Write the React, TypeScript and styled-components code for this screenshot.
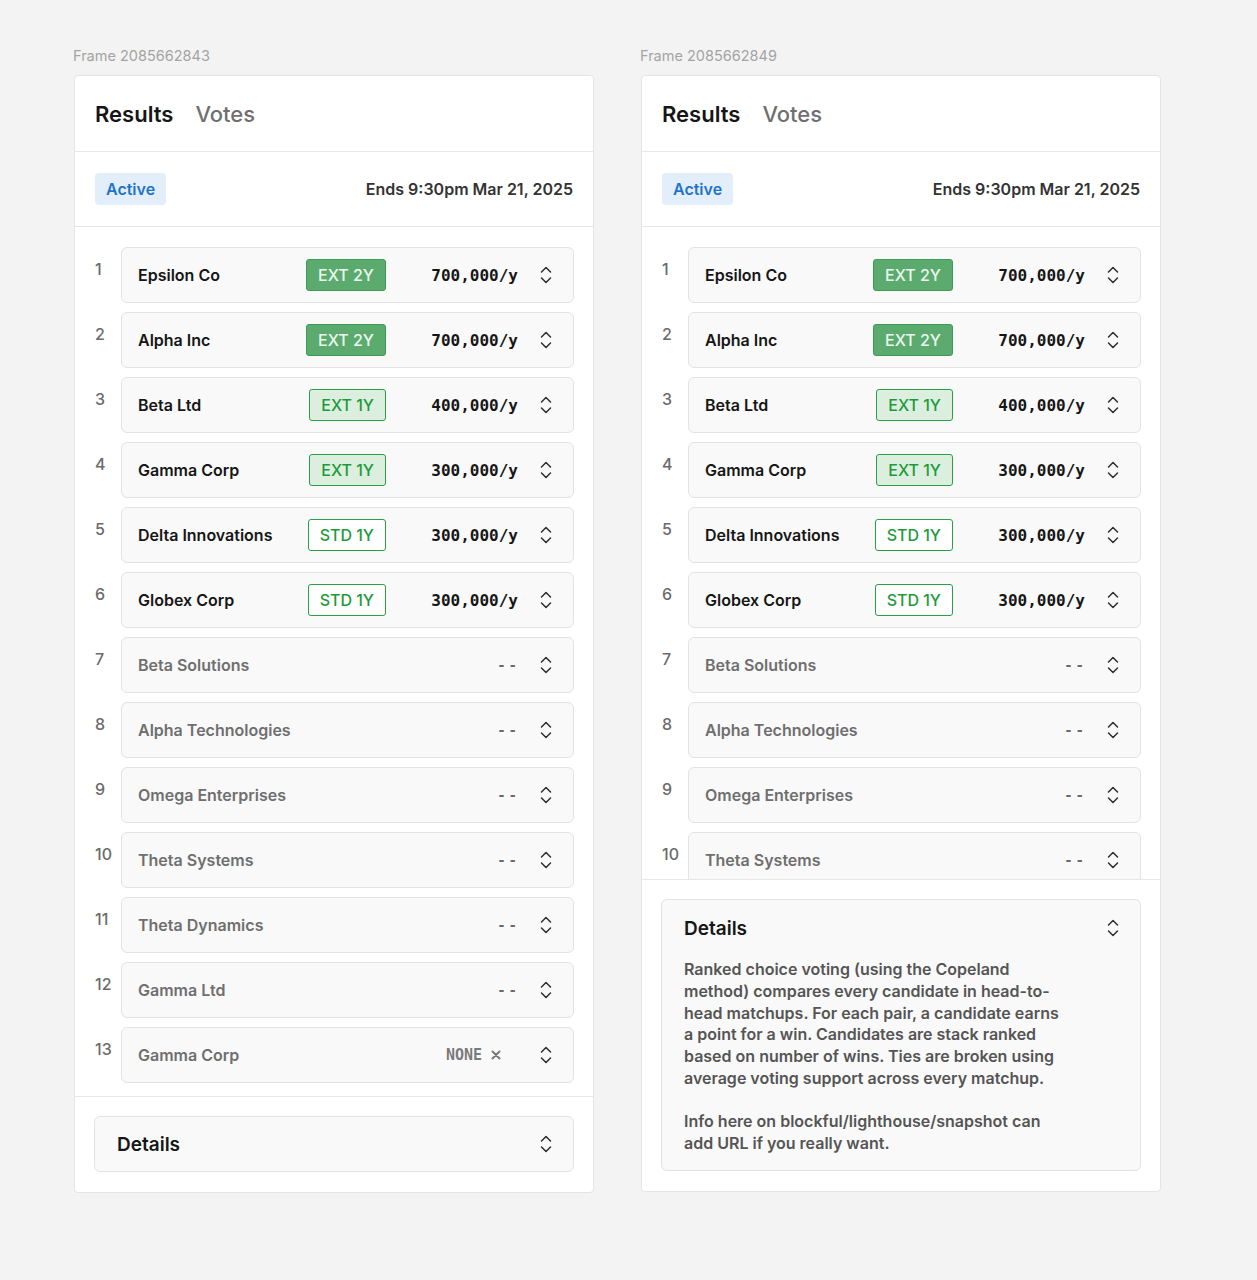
import React from "react";
import styled, { createGlobalStyle } from "styled-components";

const GlobalStyle = createGlobalStyle`
  * { box-sizing: border-box; }
  html, body { margin: 0; padding: 0; background: #f3f3f3; }
  body { font-family: Inter, "Noto Sans", sans-serif; -webkit-font-smoothing: antialiased; }
`;

const Page = styled.div`
  display: flex;
  gap: 47px;
  padding: 45px 0 80px 74px;
  min-height: 1280px;
  background: #f3f3f3;
`;

const Frame = styled.div`
  display: flex;
  flex-direction: column;
  width: 520px;
`;

const FrameLabel = styled.div`
  font-size: 14.5px;
  line-height: 20px;
  color: #a4a4a4;
  margin: 1px 0 9px -1px;
`;

const Card = styled.div`
  background: #fff;
  border: 1px solid #e4e4e4;
  border-radius: 4px;
  display: flex;
  flex-direction: column;
`;

const Header = styled.div`
  height: 76px;
  display: flex;
  align-items: center;
  gap: 22px;
  padding: 0 20px;
  border-bottom: 1px solid #e6e6e6;
`;

const Tab = styled.div<{ $active?: boolean }>`
  font-size: 22px;
  line-height: 28px;
  font-weight: ${(p) => (p.$active ? 600 : 500)};
  color: ${(p) => (p.$active ? "#161616" : "#6f6f6f")};
`;

const StatusRow = styled.div`
  height: 75px;
  display: flex;
  align-items: center;
  justify-content: space-between;
  padding: 0 20px;
  border-bottom: 1px solid #e6e6e6;
`;

const StatusBadge = styled.div`
  height: 32px;
  display: flex;
  align-items: center;
  padding: 0 11px;
  border-radius: 4px;
  background: #e2effa;
  color: #1f74c9;
  font-size: 16px;
  font-weight: 600;
`;

const Ends = styled.div`
  font-size: 16px;
  font-weight: 600;
  color: #333;
`;

const List = styled.div<{ $maxHeight?: number }>`
  display: flex;
  flex-direction: column;
  gap: 9px;
  padding: 20px 19px 13px 20px;
  border-bottom: 1px solid #e6e6e6;
  ${(p) => (p.$maxHeight ? `max-height: ${p.$maxHeight}px; overflow-y: auto; scrollbar-width: none;` : "")}
  &::-webkit-scrollbar { display: none; }
`;

const Item = styled.div`
  display: flex;
  flex-shrink: 0;
`;

const Rank = styled.div`
  width: 26px;
  flex-shrink: 0;
  padding-top: 10px;
  font-size: 16px;
  line-height: 24px;
  font-weight: 500;
  color: #6b6b6b;
`;

const Row = styled.div`
  flex: 1;
  height: 56px;
  display: flex;
  align-items: center;
  padding: 0 15px 0 16px;
  background: #f9f9f9;
  border: 1px solid #e3e3e3;
  border-radius: 6px;
`;

const Name = styled.div<{ $muted?: boolean }>`
  flex: 1;
  font-size: 16px;
  font-weight: 600;
  color: ${(p) => (p.$muted ? "#6f6f6f" : "#161616")};
`;

type Tone = "solid" | "light" | "outline";

const Tag = styled.div<{ $tone: Tone }>`
  height: 32px;
  display: flex;
  align-items: center;
  padding: 0 11px;
  border-radius: 3px;
  font-size: 16px;
  font-weight: 500;
  border: 1px solid ${(p) => (p.$tone === "solid" ? "#3f9a55" : "#2aa046")};
  background: ${(p) =>
    p.$tone === "solid" ? "#5bab6f" : p.$tone === "light" ? "#dcefdf" : "#ffffff"};
  color: ${(p) => (p.$tone === "solid" ? "#eef7f0" : "#1d9a3b")};
`;

const Value = styled.div`
  width: 116px;
  margin-left: 16px;
  display: flex;
  align-items: center;
  justify-content: flex-end;
  font-family: "DejaVu Sans Mono", "Liberation Mono", monospace;
  font-size: 16px;
  font-weight: 700;
  color: #161616;
  white-space: nowrap;
`;

const Dashes = styled.span`
  font-size: 14px;
  font-weight: 700;
  color: #6a6a6a;
  letter-spacing: 3px;
  margin-right: -2px;
`;

const NoneTag = styled.span`
  display: inline-flex;
  align-items: center;
  gap: 9px;
  margin-right: 17px;
  font-size: 15px;
  font-weight: 700;
  color: #7a7a7a;
`;

const ChevronBox = styled.div`
  width: 24px;
  margin-left: 16px;
  display: flex;
  align-items: center;
  justify-content: center;
  color: #2e2e2e;
`;

const DetailsSection = styled.div`
  padding: 19px 19px 20px 19px;
`;

const DetailsBox = styled.div<{ $open?: boolean }>`
  background: #f9f9f9;
  border: 1px solid #e3e3e3;
  border-radius: 6px;
  padding: ${(p) => (p.$open ? "16px 15px 15px 22px" : "0 15px 0 22px")};
`;

const DetailsHead = styled.div<{ $open?: boolean }>`
  height: ${(p) => (p.$open ? "24px" : "54px")};
  display: flex;
  align-items: center;
`;

const DetailsTitle = styled.div`
  flex: 1;
  font-size: 19px;
  font-weight: 600;
  color: #161616;
`;

const DetailsBody = styled.div`
  margin-top: 19px;
  max-width: 382px;
`;

const Para = styled.p`
  margin: 0;
  font-size: 16px;
  line-height: 21.75px;
  font-weight: 600;
  color: #555;
  & + & { margin-top: 21.75px; }
`;

const Chevrons = () => (
  <svg width="14" height="20" viewBox="0 0 14 20" fill="none" stroke="currentColor" strokeWidth="1.5" strokeLinecap="round" strokeLinejoin="round">
    <path d="M2.5 7 L7 2.5 L11.5 7" />
    <path d="M2.5 13 L7 17.5 L11.5 13" />
  </svg>
);

const CloseX = () => (
  <svg width="10" height="10" viewBox="0 0 10 10" fill="none" stroke="currentColor" strokeWidth="2" strokeLinecap="round">
    <path d="M1.5 1.5 L8.5 8.5 M8.5 1.5 L1.5 8.5" />
  </svg>
);

type Cand = { name: string; tag?: [string, Tone]; value?: string; none?: boolean };

const candidates: Cand[] = [
  { name: "Epsilon Co", tag: ["EXT 2Y", "solid"], value: "700,000/y" },
  { name: "Alpha Inc", tag: ["EXT 2Y", "solid"], value: "700,000/y" },
  { name: "Beta Ltd", tag: ["EXT 1Y", "light"], value: "400,000/y" },
  { name: "Gamma Corp", tag: ["EXT 1Y", "light"], value: "300,000/y" },
  { name: "Delta Innovations", tag: ["STD 1Y", "outline"], value: "300,000/y" },
  { name: "Globex Corp", tag: ["STD 1Y", "outline"], value: "300,000/y" },
  { name: "Beta Solutions" },
  { name: "Alpha Technologies" },
  { name: "Omega Enterprises" },
  { name: "Theta Systems" },
  { name: "Theta Dynamics" },
  { name: "Gamma Ltd" },
  { name: "Gamma Corp", none: true },
];

const ResultsCard = ({ label, open }: { label: string; open?: boolean }) => (
  <Frame>
    <FrameLabel>{label}</FrameLabel>
    <Card>
      <Header>
        <Tab $active>Results</Tab>
        <Tab>Votes</Tab>
      </Header>
      <StatusRow>
        <StatusBadge>Active</StatusBadge>
        <Ends>Ends 9:30pm Mar 21, 2025</Ends>
      </StatusRow>
      <List $maxHeight={open ? 653 : undefined}>
        {candidates.map((c, i) => (
          <Item key={i}>
            <Rank>{i + 1}</Rank>
            <Row>
              <Name $muted={!c.value}>{c.name}</Name>
              {c.tag && <Tag $tone={c.tag[1]}>{c.tag[0]}</Tag>}
              <Value>
                {c.value ? (
                  c.value
                ) : c.none ? (
                  <NoneTag>
                    NONE
                    <CloseX />
                  </NoneTag>
                ) : (
                  <Dashes>--</Dashes>
                )}
              </Value>
              <ChevronBox>
                <Chevrons />
              </ChevronBox>
            </Row>
          </Item>
        ))}
      </List>
      <DetailsSection>
        <DetailsBox $open={open}>
          <DetailsHead $open={open}>
            <DetailsTitle>Details</DetailsTitle>
            <ChevronBox>
              <Chevrons />
            </ChevronBox>
          </DetailsHead>
          {open && (
            <DetailsBody>
              <Para>
                Ranked choice voting (using the Copeland method) compares every candidate in head-to-head
                matchups. For each pair, a candidate earns a point for a win. Candidates are stack ranked
                based on number of wins. Ties are broken using average voting support across every matchup.
              </Para>
              <Para>Info here on blockful/lighthouse/snapshot can add URL if you really want.</Para>
            </DetailsBody>
          )}
        </DetailsBox>
      </DetailsSection>
    </Card>
  </Frame>
);

export default function App() {
  return (
    <>
      <GlobalStyle />
      <Page>
        <ResultsCard label="Frame 2085662843" />
        <ResultsCard label="Frame 2085662849" open />
      </Page>
    </>
  );
}
